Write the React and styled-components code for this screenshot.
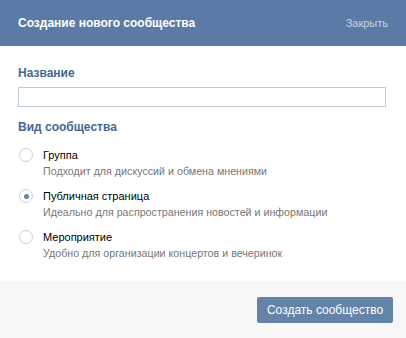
import React, { useState } from 'react';
import styled, { createGlobalStyle } from 'styled-components';

const GlobalStyle = createGlobalStyle`
  html, body {
    margin: 0;
    padding: 0;
    background: #ffffff;
  }
  body {
    font-family: "Liberation Sans", Arial, sans-serif;
    font-size: 11px;
  }
`;

const Box = styled.div`
  width: 406px;
  height: 338px;
  display: flex;
  flex-direction: column;
  background: #fff;
`;

const Header = styled.div`
  height: 46px;
  background: #5b7ba6;
  display: flex;
  align-items: center;
  justify-content: space-between;
  padding: 0 18px;
  box-sizing: border-box;
`;

const Title = styled.div`
  color: #fff;
  font-weight: bold;
  font-size: 12px;
`;

const Close = styled.a`
  color: #c6d4e4;
  font-size: 11px;
  cursor: pointer;
`;

const Body = styled.div`
  flex: 1;
  padding: 20px 18px 0;
  display: flex;
  flex-direction: column;
`;

const Label = styled.div`
  color: #45688e;
  font-weight: bold;
  font-size: 12px;
  margin-bottom: ${(p) => p.gap || 7}px;
`;

const Input = styled.input`
  width: 368px;
  height: 20px;
  box-sizing: border-box;
  border: 1px solid #c0cad5;
  outline: none;
  margin: 0 0 13px;
  padding: 2px 4px;
  font-family: inherit;
  font-size: 11px;
`;

const Options = styled.div`
  display: flex;
  flex-direction: column;
  gap: 12px;
  margin-top: 11px;
`;

const Option = styled.label`
  display: flex;
  gap: 10px;
  padding-left: 1px;
  cursor: pointer;
`;

const Circle = styled.span`
  width: 14px;
  height: 14px;
  margin-top: -1px;
  border-radius: 50%;
  border: 1px solid #c8d0d9;
  box-sizing: border-box;
  display: flex;
  align-items: center;
  justify-content: center;
  flex: none;

  &::after {
    content: '';
    width: 5px;
    height: 5px;
    border-radius: 50%;
    background: ${(p) => (p.checked ? '#6383a8' : 'transparent')};
  }
`;

const OptionText = styled.div`
  display: flex;
  flex-direction: column;
  gap: 3px;
  line-height: 13px;
`;

const OptionName = styled.div`
  color: #000;
`;

const OptionHint = styled.div`
  color: #777;
  font-size: 10.7px;
`;

const Footer = styled.div`
  height: 57px;
  background: #f7f7f7;
  display: flex;
  align-items: center;
  justify-content: flex-end;
  padding: 0 13px;
`;

const Button = styled.button`
  height: 26px;
  width: 136px;
  padding: 0;
  background: #6383a8;
  color: #fff;
  border: none;
  border-radius: 2px;
  font-family: inherit;
  font-size: 12px;
  cursor: pointer;
`;

const types = [
  { name: 'Группа', hint: 'Подходит для дискуссий и обмена мнениями' },
  { name: 'Публичная страница', hint: 'Идеально для распространения новостей и информации' },
  { name: 'Мероприятие', hint: 'Удобно для организации концертов и вечеринок' },
];

export default function App() {
  const [selected, setSelected] = useState(1);

  return (
    <>
      <GlobalStyle />
      <Box>
        <Header>
          <Title>Создание нового сообщества</Title>
          <Close>Закрыть</Close>
        </Header>
        <Body>
          <Label>Название</Label>
          <Input type="text" />
          <Label gap={4}>Вид сообщества</Label>
          <Options>
            {types.map((t, i) => (
              <Option key={t.name} onClick={() => setSelected(i)}>
                <Circle checked={selected === i} />
                <OptionText>
                  <OptionName>{t.name}</OptionName>
                  <OptionHint>{t.hint}</OptionHint>
                </OptionText>
              </Option>
            ))}
          </Options>
        </Body>
        <Footer>
          <Button>Создать сообщество</Button>
        </Footer>
      </Box>
    </>
  );
}
